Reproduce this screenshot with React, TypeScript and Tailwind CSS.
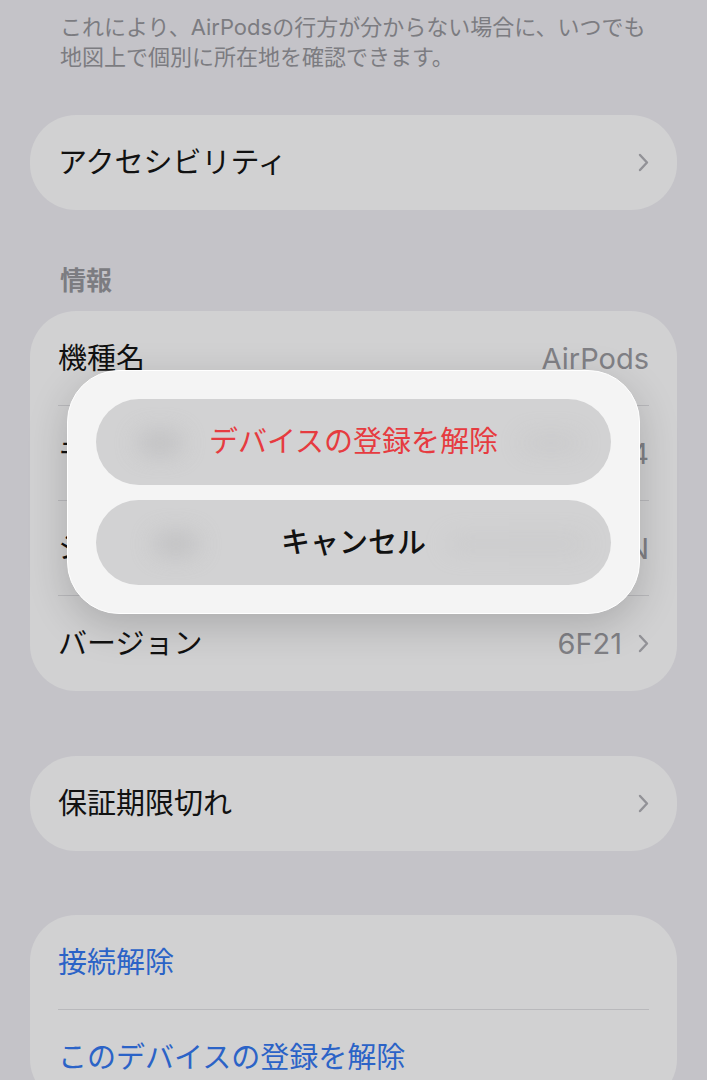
import type { ReactNode } from "react";

const font = { fontFamily: 'Inter, "Noto Sans CJK JP", sans-serif' };

function Chevron() {
  return (
    <svg width="11" height="19" viewBox="0 0 11 19" className="shrink-0">
      <path d="M2 2 L9 9.5 L2 17" fill="none" stroke="#929297" strokeWidth="2.4" strokeLinecap="round" strokeLinejoin="round" />
    </svg>
  );
}

function Row({ label, value, chevron, last, tone = "text-[#111111]" }: { label: string; value?: string; chevron?: boolean; last?: boolean; tone?: string }) {
  return (
    <div className={`mx-[28px] flex h-[95px] items-center justify-between ${last ? "" : "border-b border-[#b9b9bc]"}`}>
      <span className={`text-[29px] leading-none ${tone}`}>{label}</span>
      <div className="flex items-center gap-[16px]">
        {value && <span className="text-[29px] leading-none text-[#808085]">{value}</span>}
        {chevron && <Chevron />}
      </div>
    </div>
  );
}

function Card({ children }: { children: ReactNode }) {
  return <div className="mx-[30px] overflow-hidden rounded-[46px] bg-[#d1d1d2]">{children}</div>;
}

// blurred shapes of the rows showing through the glass buttons
function Smudge({ className }: { className: string }) {
  return <span className={`pointer-events-none absolute rounded-full bg-[#b4b4b6] blur-[12px] ${className}`} />;
}

export default function App() {
  return (
    <div style={font} className="relative h-[1080px] w-[707px] overflow-hidden bg-[#c4c3c8]">
      <p className="px-[60px] pt-[12px] text-[22px] leading-[30px] text-[#7c7c81]">
        これにより、AirPodsの行方が分からない場合に、いつでも
        <br />
        地図上で個別に所在地を確認できます。
      </p>

      <div className="mt-[43px]">
        <Card>
          <Row label="アクセシビリティ" chevron last />
        </Card>
      </div>

      <h2 className="mt-[56px] px-[60px] text-[26px] font-semibold leading-[30px] text-[#7c7c81]">情報</h2>

      <div className="mt-[15px]">
        <Card>
          <Row label="機種名" value="AirPods" />
          <Row label="モデル番号" value="A2564" />
          <Row label="シリアル番号" value="H4XKL2Q9TN" />
          <Row label="バージョン" value="6F21" chevron last />
        </Card>
      </div>

      <div className="mt-[65px]">
        <Card>
          <Row label="保証期限切れ" chevron last />
        </Card>
      </div>

      <div className="mt-[64px]">
        <Card>
          <Row label="接続解除" tone="text-[#2b63c7]" />
          <Row label="このデバイスの登録を解除" tone="text-[#2b63c7]" last />
        </Card>
      </div>

      {/* action sheet */}
      <div className="absolute left-[67px] top-[370px] flex w-[573px] flex-col gap-[15px] rounded-[52px] border border-white bg-[#f4f4f4] p-[28px] shadow-[0_12px_40px_rgba(0,0,0,0.18)]">
        <button className="relative flex h-[86px] items-center justify-center overflow-hidden rounded-full bg-[#d2d2d3] text-[29px] font-normal text-[#e63b40]">
          <Smudge className="left-[42px] top-[34px] h-[20px] w-[44px] opacity-70" />
          <Smudge className="right-[30px] top-[36px] h-[16px] w-[60px] opacity-30" />
          <span className="relative">デバイスの登録を解除</span>
        </button>
        <button className="relative flex h-[85px] items-center justify-center overflow-hidden rounded-full bg-[#d2d2d3] text-[29px] font-medium text-[#111111]">
          <Smudge className="left-[58px] top-[34px] h-[20px] w-[44px] opacity-70" />
          <Smudge className="right-[25px] top-[36px] h-[16px] w-[140px] opacity-25" />
          <span className="relative">キャンセル</span>
        </button>
      </div>
    </div>
  );
}
